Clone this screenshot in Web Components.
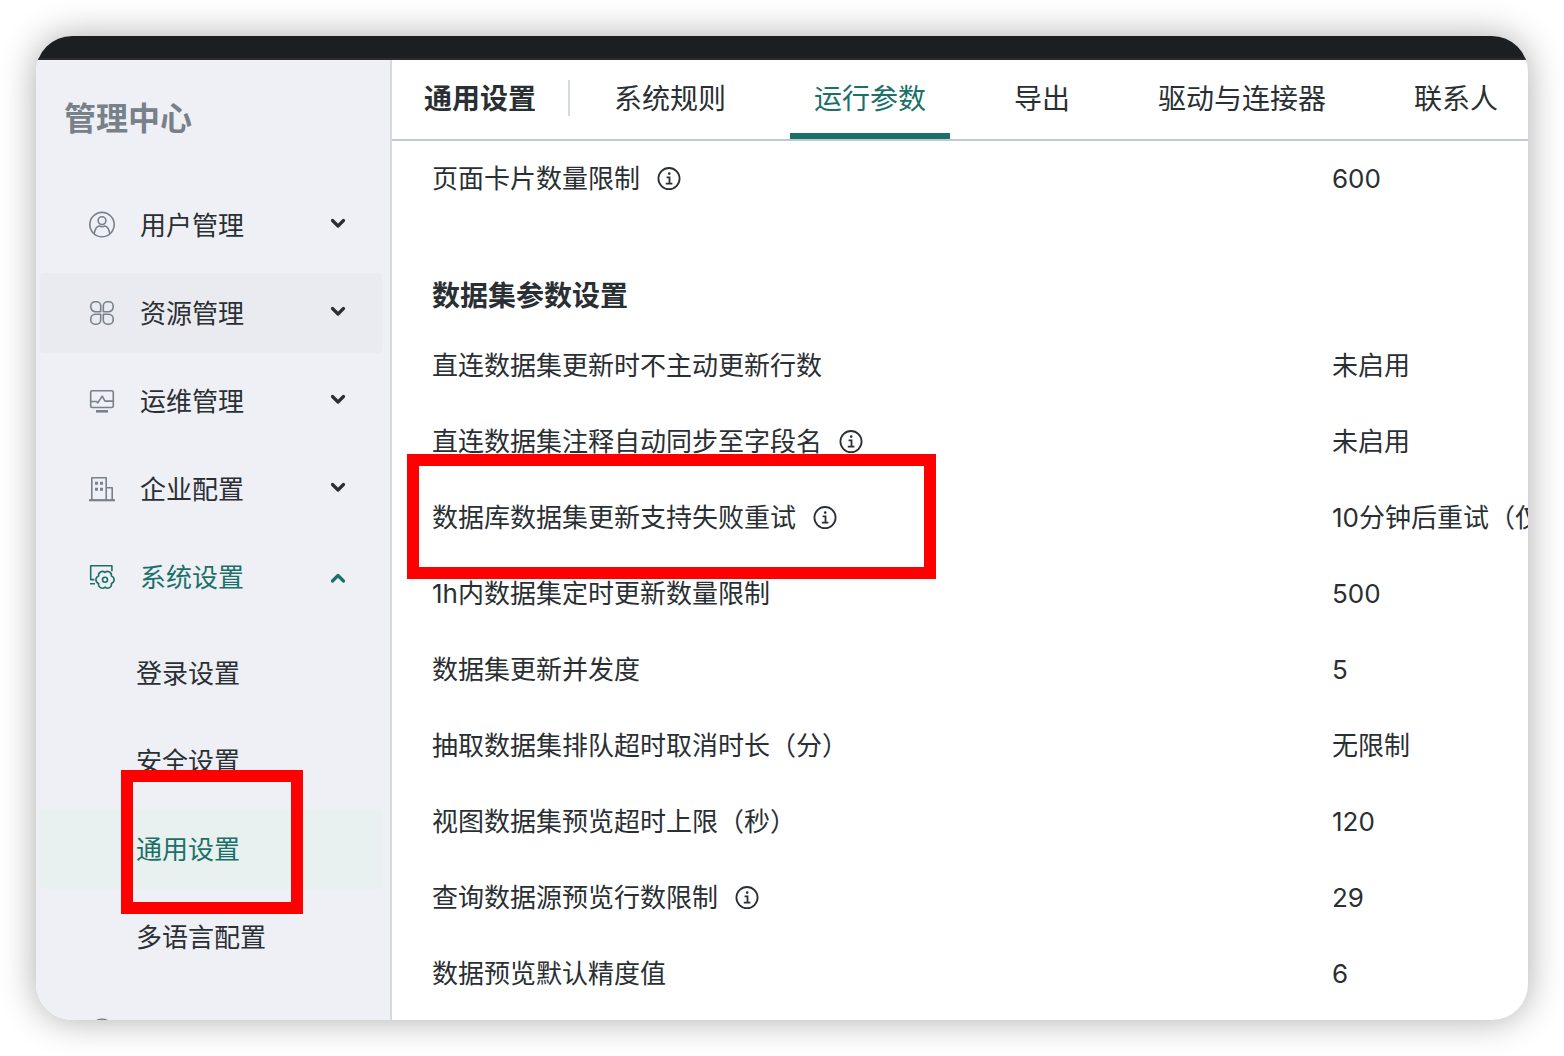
<!DOCTYPE html>
<html lang="zh-CN">
<head>
	<meta charset="utf-8">
	<meta name="viewport" content="width=device-width, initial-scale=1">
	<title>管理中心</title>
	<style>
		html {
			--text: #2a2f33;
			--muted: #78808a;
			--accent: #1b7068;
			--side-bg: #eff0f6;
			--side-hover: #eaebf0;
			--side-active: #e8f1f0;
			--side-line: #d5d9e0;
			--head-line: #c3c7d1;
			--mark: #ff0000;
		}
		body {
			margin: 0;
			padding: 36px;
			box-sizing: border-box;
			height: 100vh;
			background: #fff;
			color: var(--text);
			font-family: Inter, "Noto Sans CJK SC", sans-serif;
			font-size: 26px;
			line-height: 40px;
		}
	</style>
</head>
<body>
	<admin-shell>
		<side-nav slot="side" heading="管理中心">
			<nav-group icon="user" label="用户管理"></nav-group>
			<nav-group icon="grid" label="资源管理" hovered></nav-group>
			<nav-group icon="monitor" label="运维管理"></nav-group>
			<nav-group icon="building" label="企业配置"></nav-group>
			<nav-group icon="system" label="系统设置" open>
				<nav-link label="登录设置"></nav-link>
				<nav-link label="安全设置"></nav-link>
				<nav-link label="通用设置" active marked></nav-link>
				<nav-link label="多语言配置"></nav-link>
			</nav-group>
			<nav-group icon="user" label=""></nav-group>
		</side-nav>
		<tab-bar slot="head" heading="通用设置">
			<tab-item>系统规则</tab-item>
			<tab-item active>运行参数</tab-item>
			<tab-item>导出</tab-item>
			<tab-item>驱动与连接器</tab-item>
			<tab-item>联系人</tab-item>
		</tab-bar>
		<param-section id="page-params"></param-section>
		<param-section id="dataset-params" heading="数据集参数设置"></param-section>
	</admin-shell>

	<script>
		const ICONS = {
			user: `<circle cx="14" cy="13.6" r="12.2"/><circle cx="14" cy="9.6" r="3.9"/>
				<path d="M6.200 23C6.800 18.400 8.600 15.600 11 14.900c1.900 1 4.100 1 6 0 2.400.7 4.200 3.500 4.800 8.100"/>`,
			grid: `<path d="M12.700 12.700H7.400a4.600 4.600 0 0 1-4.600-4.600V7a4.200 4.200 0 0 1 4.200-4.200h1.500A4.200 4.200 0 0 1 12.700 7z"/>
				<path d="M15.300 12.700h5.300a4.600 4.600 0 0 0 4.600-4.600V7A4.200 4.200 0 0 0 21 2.800h-1.500A4.200 4.200 0 0 0 15.300 7z"/>
				<path d="M12.700 15.300H7.400a4.600 4.600 0 0 0-4.600 4.600V21A4.200 4.200 0 0 0 7 25.200h1.500a4.200 4.200 0 0 0 4.200-4.200z"/>
				<path d="M15.300 15.300h5.300a4.600 4.600 0 0 1 4.600 4.600V21a4.200 4.200 0 0 1-4.200 4.200h-1.500a4.200 4.200 0 0 1-4.200-4.200z"/>`,
			monitor: `<rect x="2.700" y="3.700" width="22.600" height="16.800" rx="1.500"/>
				<path d="M2.700 14.500h5.900l1.200 1.400 4.400-6.800 2.800 5h8.300"/><path d="M8 24.300h12" stroke-width="2.600"/>`,
			building: `<path d="M3.800 25V2.700h14.400V25M18.200 12.700h6V25"/><path d="M1 25.200h26" stroke-width="2.200"/>
				<path d="M7 8.300h3M12 8.300h3M7 14.300h3M12 14.300h3" stroke-width="3"/>`,
			system: `<path d="M6.400 16.600H2.700V2.700h21.200v5.600M2 20.800h5"/>
				<path d="M23.400 20.500A3.900 3.900 0 0 1 17 24.200 3.900 3.900 0 0 1 10.600 20.500 3.900 3.900 0 0 1 10.600 13.100 3.900 3.900 0 0 1 17 9.400 3.900 3.900 0 0 1 23.400 13.100 3.900 3.900 0 0 1 23.400 20.500z"/>
				<circle cx="17" cy="16.800" r="2.500"/>`
		};

		function icon(name) {
			return `<svg class="icon" viewBox="0 0 28 28" width="28" height="28" fill="none" stroke="currentColor" stroke-width="1.6" stroke-linejoin="round" aria-hidden="true">${ICONS[name]}</svg>`;
		}

		const INFO_ICON = `
			<svg viewBox="0 0 26 26" width="26" height="26" fill="none" stroke="currentColor" stroke-width="1.8" aria-hidden="true">
				<circle cx="13" cy="12.600" r="10.600"/>
				<path d="M10.600 11.400h2.900v6M9.800 17.600h6.600"/>
				<circle cx="13.200" cy="7.600" r="1.300" fill="currentColor" stroke="none"/>
			</svg>`;

		// Frame: dark strip on top, sidebar left, tabs and content right
		class AdminShell extends HTMLElement {
			constructor() {
				super();
				this.attachShadow({ mode: 'open' });
				this.shadowRoot.innerHTML = `
					<style>
						:host {
							display: flex;
							flex-direction: column;
							height: 100%;
							overflow: hidden;
							border-radius: 36px;
							background: #fff;
							box-shadow: 0 0 36px rgba(0, 0, 0, .33);
						}
						.strip {
							flex: none;
							height: 22px;
							background: #1b1f22;
							border-bottom: 2px solid #2b2a2e;
						}
						.body {
							flex: 1;
							min-height: 0;
							display: grid;
							grid-template-columns: 356px minmax(0, 1fr);
						}
						main {
							min-height: 0;
							overflow: hidden;
						}
					</style>
					<div class="strip"></div>
					<div class="body">
						<slot name="side"></slot>
						<main>
							<slot name="head"></slot>
							<slot></slot>
						</main>
					</div>
				`;
			}
		}

		class SideNav extends HTMLElement {
			connectedCallback() {
				this.attachShadow({ mode: 'open' });
				this.shadowRoot.innerHTML = `
					<style>
						:host {
							display: block;
							min-height: 0;
							overflow: hidden;
							background: var(--side-bg);
							border-right: 2px solid var(--side-line);
						}
						h1 {
							margin: 0;
							padding: 35px 28px 42px;
							font-size: 32px;
							line-height: 48px;
							font-weight: 700;
							color: var(--muted);
						}
						nav {
							display: flex;
							flex-direction: column;
							gap: 8px;
							padding: 0 8px 0 4px;
						}
					</style>
					<h1>${this.getAttribute('heading')}</h1>
					<nav><slot></slot></nav>
				`;
			}
		}

		class NavGroup extends HTMLElement {
			connectedCallback() {
				const open = this.hasAttribute('open');
				const label = this.getAttribute('label');
				const chevron = open ? 'M6.5 16l5.5-5.5 5.5 5.5' : 'M6.5 7.5l5.5 5.5 5.5-5.5';
				this.attachShadow({ mode: 'open' });
				this.shadowRoot.innerHTML = `
					<style>
						:host { display: block; }
						button {
							display: flex;
							align-items: center;
							gap: 24px;
							width: 100%;
							height: 80px;
							padding: 0 32px 0 48px;
							border: 0;
							border-radius: 4px;
							background: none;
							color: inherit;
							font: inherit;
							text-align: left;
							cursor: pointer;
						}
						:host([hovered]) button, button:hover { background: var(--side-hover); }
						:host([open]) button { color: var(--accent); }
						.icon { color: var(--muted); }
						:host([open]) .icon { color: inherit; }
						span {
							flex: 1;
							padding-top: 2px;
						}
						.sub {
							display: none;
							flex-direction: column;
							gap: 8px;
							padding: 16px 0 7px;
						}
						:host([open]) .sub { display: flex; }
					</style>
					<button type="button" aria-expanded="${open}">
						${icon(this.getAttribute('icon'))}
						<span>${label}</span>
						<svg viewBox="0 0 24 24" width="24" height="24" fill="none" stroke="currentColor" stroke-width="3.2" stroke-linecap="round" stroke-linejoin="round" aria-hidden="true"><path d="${chevron}"/></svg>
					</button>
					<div class="sub"><slot></slot></div>
				`;
			}
		}

		class NavLink extends HTMLElement {
			connectedCallback() {
				this.attachShadow({ mode: 'open' });
				this.shadowRoot.innerHTML = `
					<style>
						:host {
							display: block;
							position: relative;
						}
						a {
							display: flex;
							align-items: center;
							box-sizing: border-box;
							height: 80px;
							padding: 2px 0 0 96px;
							border-radius: 4px;
							color: inherit;
							text-decoration: none;
						}
						:host([active]) a {
							background: var(--side-active);
							color: var(--accent);
						}
						:host([marked]) { z-index: 1; }
						.mark {
							position: absolute;
							left: 81px;
							top: -39px;
							width: 182px;
							height: 144px;
							box-sizing: border-box;
							border: 12px solid var(--mark);
							pointer-events: none;
						}
					</style>
					<a href="#">${this.getAttribute('label')}</a>
					${this.hasAttribute('marked') ? '<div class="mark"></div>' : ''}
				`;
			}
		}

		class TabBar extends HTMLElement {
			connectedCallback() {
				this.attachShadow({ mode: 'open' });
				this.shadowRoot.innerHTML = `
					<style>
						:host {
							display: flex;
							align-items: center;
							height: 79px;
							padding-left: 32px;
							border-bottom: 2px solid var(--head-line);
							font-size: 28px;
							white-space: nowrap;
						}
						h2 {
							margin: 0;
							padding-bottom: 2px;
							font-size: 28px;
							font-weight: 700;
						}
						.divider {
							flex: none;
							width: 2px;
							height: 36px;
							margin: 0 20px 4px 32px;
							background: var(--side-line);
						}
						nav {
							display: flex;
							gap: 40px;
							height: 100%;
						}
					</style>
					<h2>${this.getAttribute('heading')}</h2>
					<div class="divider"></div>
					<nav><slot></slot></nav>
				`;
			}
		}

		class TabItem extends HTMLElement {
			constructor() {
				super();
				this.attachShadow({ mode: 'open' });
				this.shadowRoot.innerHTML = `
					<style>
						:host { display: block; }
						a {
							display: flex;
							align-items: center;
							box-sizing: border-box;
							height: 100%;
							padding: 4px 24px 0;
							border-bottom: 6px solid transparent;
							color: inherit;
							text-decoration: none;
						}
						:host([active]) a {
							color: var(--accent);
							border-color: var(--accent);
						}
					</style>
					<a href="#"><slot></slot></a>
				`;
			}
		}

		class ParamSection extends HTMLElement {
			set rows(rows) {
				const heading = this.getAttribute('heading');
				if (!this.shadowRoot) this.attachShadow({ mode: 'open' });
				this.shadowRoot.innerHTML = `
					<style>
						:host {
							display: block;
							padding-left: 40px;
						}
						h3 {
							margin: 0;
							padding: 61px 0 14px;
							font-size: 28px;
							line-height: 36px;
							font-weight: 700;
						}
						table {
							width: 100%;
							table-layout: fixed;
							border-collapse: collapse;
						}
						.value { width: 196px; }
						th, td {
							height: 76px;
							padding: 0;
							font-weight: 400;
							text-align: left;
							white-space: nowrap;
						}
						.name {
							display: flex;
							align-items: center;
							gap: 16px;
							position: relative;
						}
						.mark {
							position: absolute;
							left: -25px;
							top: -44px;
							width: 529px;
							height: 125px;
							box-sizing: border-box;
							border: 12px solid var(--mark);
							pointer-events: none;
							z-index: 1;
						}
					</style>
					${heading ? `<h3>${heading}</h3>` : ''}
					<table>
						<colgroup><col><col class="value"></colgroup>
						<tbody>
							${rows.map(row => `
								<tr>
									<th scope="row">
										<div class="name">
											<span>${row.name}</span>${row.info ? INFO_ICON : ''}
											${row.marked ? '<div class="mark"></div>' : ''}
										</div>
									</th>
									<td>${row.value}</td>
								</tr>
							`).join('')}
						</tbody>
					</table>
				`;
			}
		}

		customElements.define('admin-shell', AdminShell);
		customElements.define('side-nav', SideNav);
		customElements.define('nav-group', NavGroup);
		customElements.define('nav-link', NavLink);
		customElements.define('tab-bar', TabBar);
		customElements.define('tab-item', TabItem);
		customElements.define('param-section', ParamSection);

		document.querySelector('#page-params').rows = [
			{ name: '页面卡片数量限制', value: '600', info: true }
		];

		document.querySelector('#dataset-params').rows = [
			{ name: '直连数据集更新时不主动更新行数', value: '未启用' },
			{ name: '直连数据集注释自动同步至字段名', value: '未启用', info: true },
			{ name: '数据库数据集更新支持失败重试', value: '10分钟后重试（仅', info: true, marked: true },
			{ name: '1h内数据集定时更新数量限制', value: '500' },
			{ name: '数据集更新并发度', value: '5' },
			{ name: '抽取数据集排队超时取消时长（分）', value: '无限制' },
			{ name: '视图数据集预览超时上限（秒）', value: '120' },
			{ name: '查询数据源预览行数限制', value: '29', info: true },
			{ name: '数据预览默认精度值', value: '6' }
		];
	</script>
</body>
</html>
